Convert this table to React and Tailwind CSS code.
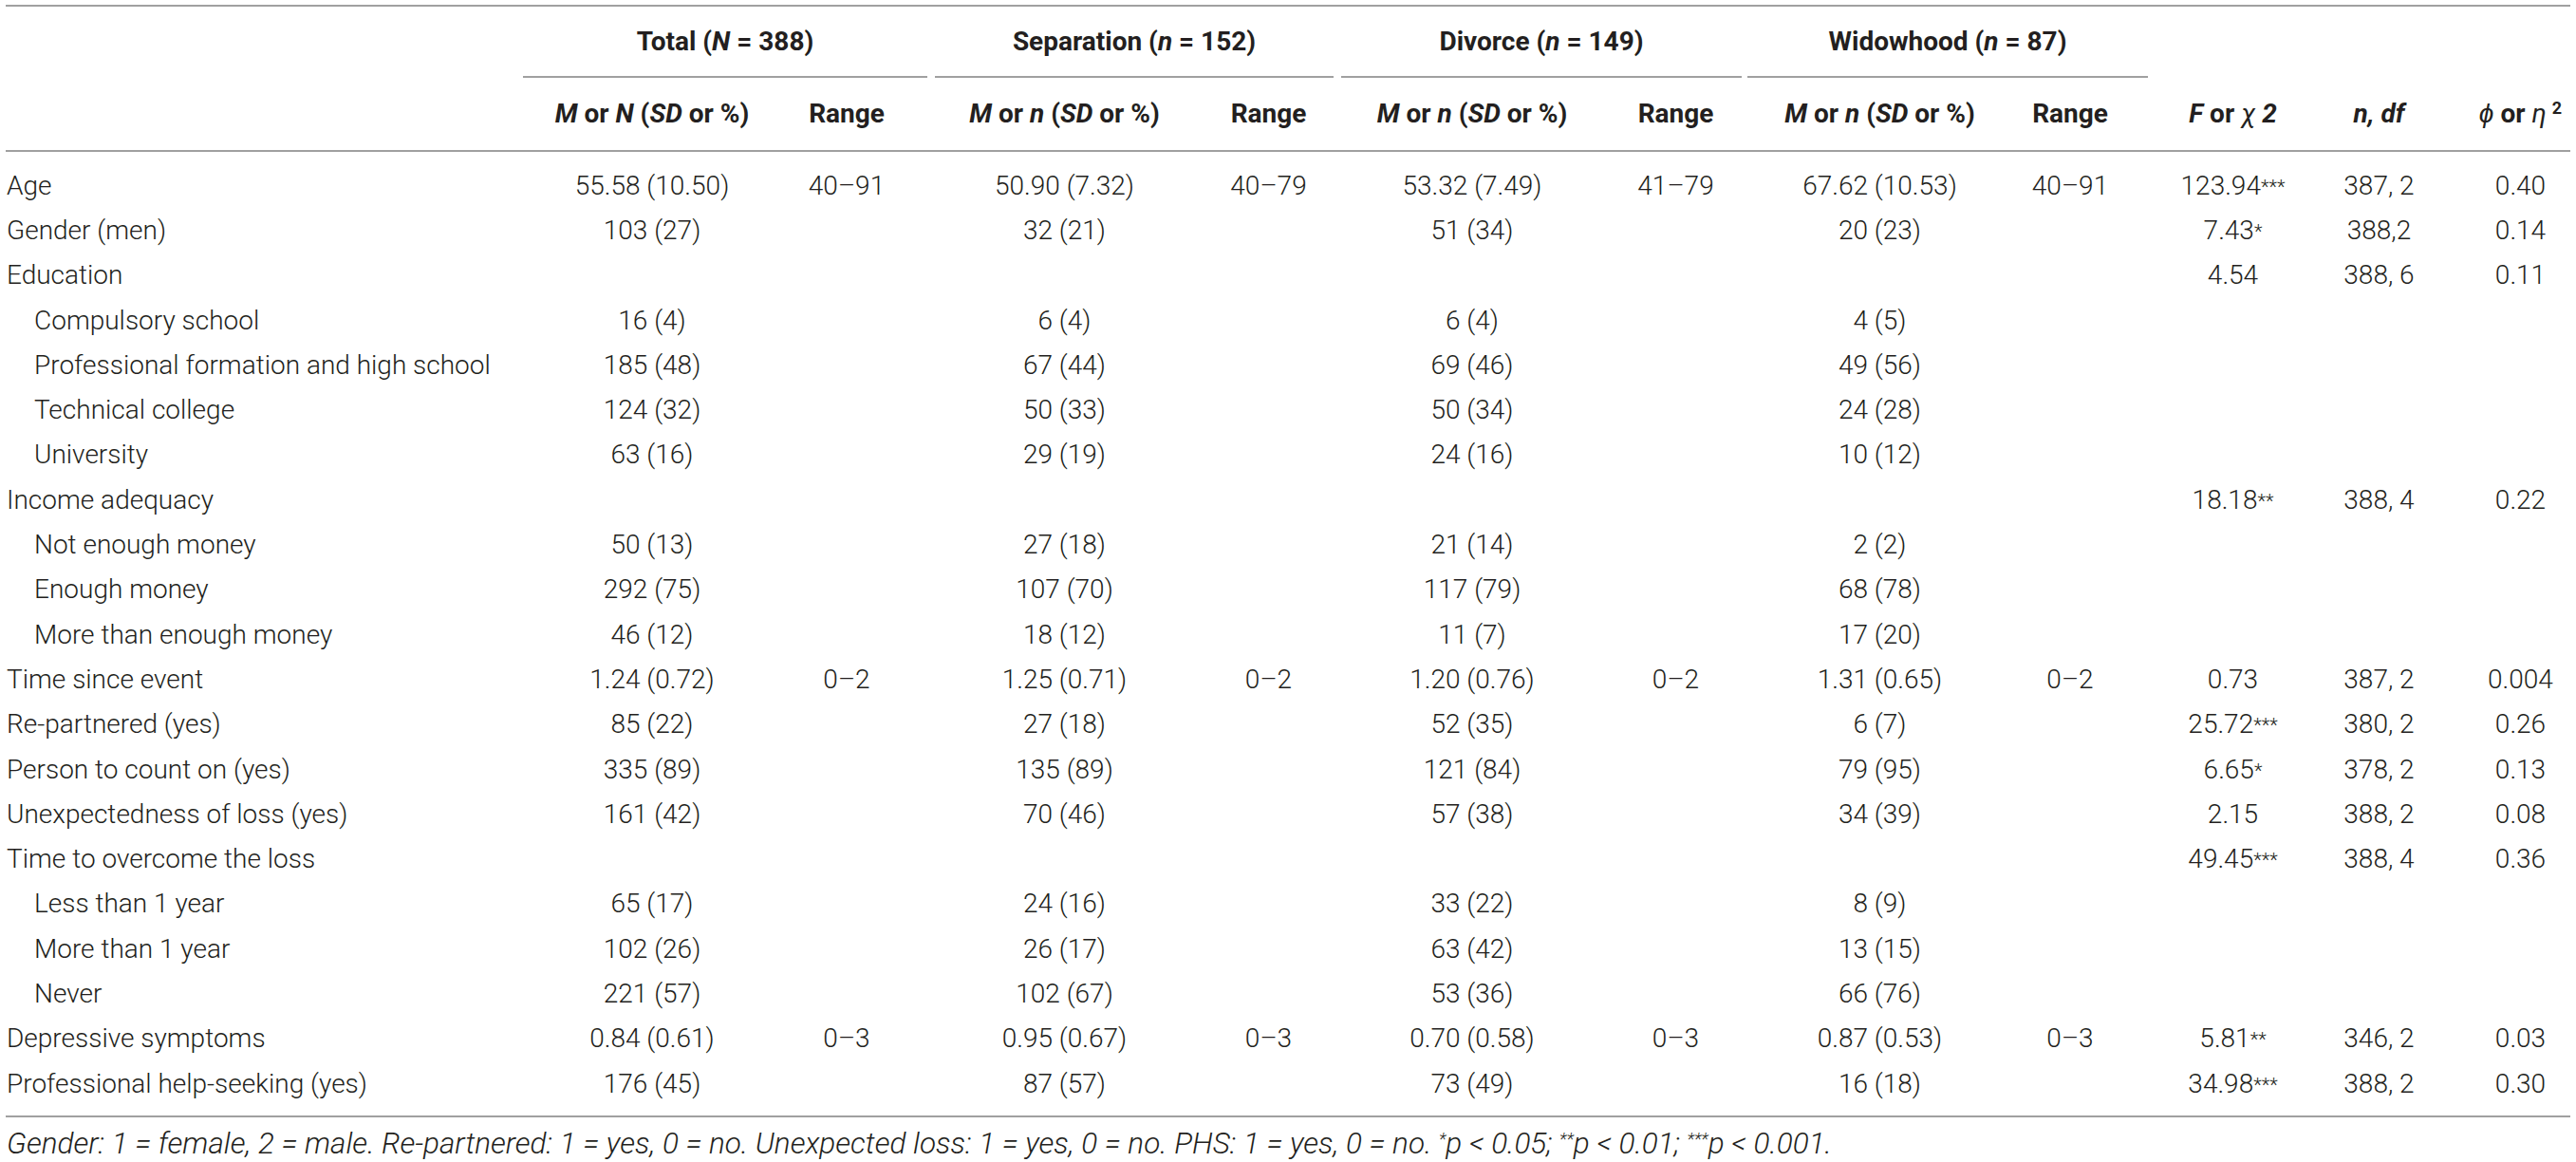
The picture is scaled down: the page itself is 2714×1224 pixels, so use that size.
import React from "react";

const rows = [
  { l: "Age", v: ["55.58 (10.50)", "40–91", "50.90 (7.32)", "40–79", "53.32 (7.49)", "41–79", "67.62 (10.53)", "40–91", ["123.94", "***"], "387, 2", "0.40"] },
  { l: "Gender (men)", v: ["103 (27)", "", "32 (21)", "", "51 (34)", "", "20 (23)", "", ["7.43", "*"], "388,2", "0.14"] },
  { l: "Education", v: ["", "", "", "", "", "", "", "", ["4.54", ""], "388, 6", "0.11"] },
  { l: "Compulsory school", i: true, v: ["16 (4)", "", "6 (4)", "", "6 (4)", "", "4 (5)", "", "", "", ""] },
  { l: "Professional formation and high school", i: true, v: ["185 (48)", "", "67 (44)", "", "69 (46)", "", "49 (56)", "", "", "", ""] },
  { l: "Technical college", i: true, v: ["124 (32)", "", "50 (33)", "", "50 (34)", "", "24 (28)", "", "", "", ""] },
  { l: "University", i: true, v: ["63 (16)", "", "29 (19)", "", "24 (16)", "", "10 (12)", "", "", "", ""] },
  { l: "Income adequacy", v: ["", "", "", "", "", "", "", "", ["18.18", "**"], "388, 4", "0.22"] },
  { l: "Not enough money", i: true, v: ["50 (13)", "", "27 (18)", "", "21 (14)", "", "2 (2)", "", "", "", ""] },
  { l: "Enough money", i: true, v: ["292 (75)", "", "107 (70)", "", "117 (79)", "", "68 (78)", "", "", "", ""] },
  { l: "More than enough money", i: true, v: ["46 (12)", "", "18 (12)", "", "11 (7)", "", "17 (20)", "", "", "", ""] },
  { l: "Time since event", v: ["1.24 (0.72)", "0–2", "1.25 (0.71)", "0–2", "1.20 (0.76)", "0–2", "1.31 (0.65)", "0–2", ["0.73", ""], "387, 2", "0.004"] },
  { l: "Re-partnered (yes)", v: ["85 (22)", "", "27 (18)", "", "52 (35)", "", "6 (7)", "", ["25.72", "***"], "380, 2", "0.26"] },
  { l: "Person to count on (yes)", v: ["335 (89)", "", "135 (89)", "", "121 (84)", "", "79 (95)", "", ["6.65", "*"], "378, 2", "0.13"] },
  { l: "Unexpectedness of loss (yes)", v: ["161 (42)", "", "70 (46)", "", "57 (38)", "", "34 (39)", "", ["2.15", ""], "388, 2", "0.08"] },
  { l: "Time to overcome the loss", v: ["", "", "", "", "", "", "", "", ["49.45", "***"], "388, 4", "0.36"] },
  { l: "Less than 1 year", i: true, v: ["65 (17)", "", "24 (16)", "", "33 (22)", "", "8 (9)", "", "", "", ""] },
  { l: "More than 1 year", i: true, v: ["102 (26)", "", "26 (17)", "", "63 (42)", "", "13 (15)", "", "", "", ""] },
  { l: "Never", i: true, v: ["221 (57)", "", "102 (67)", "", "53 (36)", "", "66 (76)", "", "", "", ""] },
  { l: "Depressive symptoms", v: ["0.84 (0.61)", "0–3", "0.95 (0.67)", "0–3", "0.70 (0.58)", "0–3", "0.87 (0.53)", "0–3", ["5.81", "**"], "346, 2", "0.03"] },
  { l: "Professional help-seeking (yes)", v: ["176 (45)", "", "87 (57)", "", "73 (49)", "", "16 (18)", "", ["34.98", "***"], "388, 2", "0.30"] },
];

const GRID =
  "grid grid-cols-[586px_212px_216px_215px_215px_214px_215px_215px_186px_157px_151px_132px]";

// extra padding per column index (0-based among the 11 value columns)
const PAD = ["pr-[10px]", "pr-[28px]", "", "", "", "", "", "", "", "", "pl-[15px]"];

function Stars({ s }) {
  if (!s) return null;
  return <sup className="text-[20px] relative -top-[1px]">{s}</sup>;
}

function Cell({ val, j }) {
  const content = Array.isArray(val) ? (
    <span>
      {val[0]}
      <Stars s={val[1]} />
    </span>
  ) : (
    <span>{val}</span>
  );
  return <div className={"flex items-center justify-center whitespace-nowrap " + PAD[j]}>{content}</div>;
}

function SubHead({ children, j }) {
  return (
    <div className={"flex items-center justify-center whitespace-nowrap " + PAD[j]}>
      <span>{children}</span>
    </div>
  );
}

export default function App() {
  const MN = (
    <>
      <i>M</i> or <i>n</i> (<i>SD</i> or %)
    </>
  );
  return (
    <div
      className="w-[2714px] h-[1224px] bg-white text-[#231f20] overflow-hidden pt-[5px]"
      style={{ fontFamily: "Roboto, 'Liberation Sans', Arial, sans-serif" }}
    >
      <div className="mx-[6px] border-t-2 border-[#a0a0a0]" />
      {/* Group header row */}
      <div className="flex h-[75px] text-[28px] font-bold">
        <div className="w-[551px]" />
        <div className="w-[426px] flex items-center justify-center border-b-2 border-[#a0a0a0]">
          <span>
            Total (<i>N</i> = 388)
          </span>
        </div>
        <div className="ml-[8px] w-[420px] flex items-center justify-center border-b-2 border-[#a0a0a0]">
          <span>
            Separation (<i>n</i> = 152)
          </span>
        </div>
        <div className="ml-[8px] w-[422px] flex items-center justify-center border-b-2 border-[#a0a0a0]">
          <span>
            Divorce (<i>n</i> = 149)
          </span>
        </div>
        <div className="ml-[6px] w-[422px] flex items-center justify-center border-b-2 border-[#a0a0a0]">
          <span>
            Widowhood (<i>n</i> = 87)
          </span>
        </div>
      </div>
      {/* Sub header row */}
      <div className={GRID + " h-[76px] text-[28px] font-bold"}>
        <div />
        <SubHead j={0}>
          <i>M</i> or <i>N</i> (<i>SD</i> or %)
        </SubHead>
        <SubHead j={1}>Range</SubHead>
        <SubHead j={2}>{MN}</SubHead>
        <SubHead j={3}>Range</SubHead>
        <SubHead j={4}>{MN}</SubHead>
        <SubHead j={5}>Range</SubHead>
        <SubHead j={6}>{MN}</SubHead>
        <SubHead j={7}>Range</SubHead>
        <SubHead j={8}>
          <i>F</i> or <i className="font-normal">χ</i> <i>2</i>
        </SubHead>
        <SubHead j={9}>
          <i>n, df</i>
        </SubHead>
        <SubHead j={10}>
          <i className="font-normal">ϕ</i> or <i className="font-normal">η</i>
          <sup className="text-[18px] ml-[6px]">2</sup>
        </SubHead>
      </div>
      <div className="mx-[6px] border-t-2 border-[#a0a0a0]" />
      {/* Body */}
      <div className="pt-[12px] pb-[10px] text-[28px] font-light">
        {rows.map((r, idx) => (
          <div key={idx} className={GRID + " h-[47.3px]"}>
            <div className={"flex items-center whitespace-nowrap " + (r.i ? "pl-[36px]" : "pl-[7px]")}>{r.l}</div>
            {r.v.map((val, j) => (
              <Cell key={j} val={val} j={j} />
            ))}
          </div>
        ))}
      </div>
      <div className="mx-[6px] border-t-2 border-[#a0a0a0]" />
      <div className="pl-[7px] pt-[11px] text-[31.5px] italic font-light whitespace-nowrap leading-[34px]">
        Gender: 1 = female, 2 = male. Re-partnered: 1 = yes, 0 = no. Unexpected loss: 1 = yes, 0 = no. PHS: 1 = yes, 0 = no.{" "}
        <sup className="text-[18px]">*</sup>p &lt; 0.05; <sup className="text-[18px]">**</sup>p &lt; 0.01;{" "}
        <sup className="text-[18px]">***</sup>p &lt; 0.001.
      </div>
    </div>
  );
}
